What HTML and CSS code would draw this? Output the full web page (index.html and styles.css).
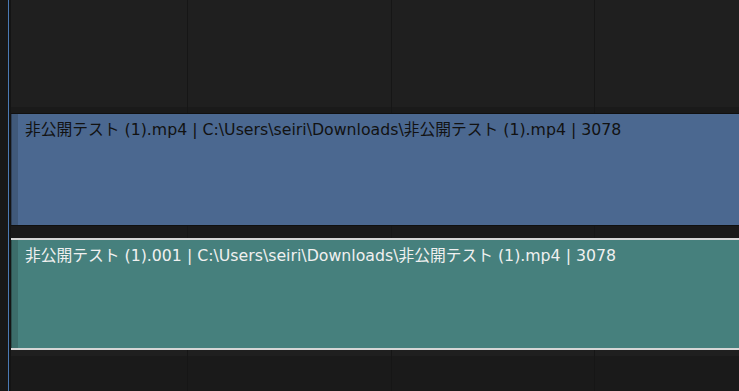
FILE: index.html
```html
<!DOCTYPE html>
<html lang="ja">
<head>
  <meta charset="UTF-8">
  <meta name="viewport" content="width=device-width, initial-scale=1.0">
  <title>Sequencer</title>
  <link rel="stylesheet" href="styles.css">
</head>
<body>
  <div class="timeline">
    <div class="gutter">
      <div class="playhead"></div>
    </div>
    <div class="channels">
      <div class="channel channel-top"></div>
      <div class="gap"></div>
      <div class="strip strip-movie">
        <div class="handle"></div>
        <div class="label">非公開テスト (1).mp4 | C:\Users\seiri\Downloads\非公開テスト (1).mp4 | 3078</div>
      </div>
      <div class="gap gap-mid"></div>
      <div class="strip strip-meta">
        <div class="handle"></div>
        <div class="label">非公開テスト (1).001 | C:\Users\seiri\Downloads\非公開テスト (1).mp4 | 3078</div>
      </div>
      <div class="gap gap-light"></div>
      <div class="channel channel-bottom"></div>
    </div>
  </div>
</body>
</html>
```

FILE: styles.css
```css
html, body {
  margin: 0;
  padding: 0;
  height: 100%;
  overflow: hidden;
  background-color: #1a1a1a;
}
.timeline {
  display: flex;
  height: 391px;
  font-family: "DejaVu Sans", "Noto Sans CJK JP", sans-serif;
}
.gutter {
  width: 8px;
  flex-shrink: 0;
  background-color: #181818;
  border-right: 3px solid #141414;
  position: relative;
}
.playhead {
  position: absolute;
  top: 0;
  bottom: 0;
  right: -1px;
  width: 1px;
  background-color: #4a7ab4;
}
.channels {
  flex: 1;
  display: flex;
  flex-direction: column;
  min-width: 0;
}
.channel,
.gap {
  background-image: repeating-linear-gradient(90deg,
    transparent 0, transparent 176px,
    #161616 176px, #161616 177px,
    transparent 177px, transparent 203.5px);
}
.channel-top {
  height: 107px;
  background-color: #1f1f1f;
}
.gap {
  height: 6px;
  background-color: #1a1a1a;
}
.gap-mid {
  height: 12px;
}
.gap-light {
  background-color: #1f1f1f;
}
.channel-bottom {
  flex: 1;
  background-color: #1a1a1a;
}
.strip {
  display: flex;
  height: 111px;
  flex-shrink: 0;
}
.strip-movie {
  background-color: #4b6890;
  border-top: 1px solid #101010;
  border-bottom: 1px solid #101010;
  color: #121212;
}
.strip-meta {
  height: 108px;
  background-color: #46807d;
  border-top: 2px solid #d6d6d6;
  border-bottom: 2px solid #d6d6d6;
  color: #f0f0f0;
}
.handle {
  width: 6px;
  flex-shrink: 0;
}
.strip-movie .handle {
  background-color: #40597a;
  border-left: 1px solid #2f4058;
}
.strip-meta .handle {
  background-color: #3c6d6a;
  border-left: 1px solid #2c4f4d;
}
.label {
  padding: 6px 0 0 7px;
  font-size: 15.75px;
  line-height: 19px;
  white-space: nowrap;
}
```
